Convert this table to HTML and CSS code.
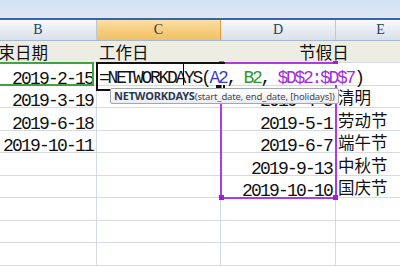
FILE: index.html
```html
<!DOCTYPE html>
<html lang="zh-CN">
<head>
<meta charset="utf-8">
<title>工作日</title>
<link rel="stylesheet" href="styles.css">
</head>
<body>
<div class="app">
  <div class="ribbon"></div>

  <div class="colhead">
    <div class="hcell">B</div>
    <div class="hcell sel">C</div>
    <div class="hcell">D</div>
    <div class="hcell">E</div>
  </div>

  <div class="cells">
    <div class="row title h22">
      <div class="cell zh">结束日期</div>
      <div class="cell zh">工作日</div>
      <div class="cell zh merged">节假日</div>
    </div>

    <div class="row h23">
      <div class="cell num ref-green">2019-2-15</div>
      <div class="cell active">
        <div class="editor"><span>=NETWORKDAYS(</span><span class="r-a">A2</span><span>, </span><span class="r-b">B2</span><span>, </span><span class="r-d">$D$2:$D$7</span><span>)</span><i class="caret"></i></div>
      </div>
      <div class="cell num"></div>
      <div class="cell zh"></div>
    </div>

    <div class="row h22">
      <div class="cell num">2019-3-19</div>
      <div class="cell"></div>
      <div class="cell num">2019-4-5</div>
      <div class="cell zh">清明</div>
    </div>

    <div class="row h23">
      <div class="cell num">2019-6-18</div>
      <div class="cell"></div>
      <div class="cell num">2019-5-1</div>
      <div class="cell zh">劳动节</div>
    </div>

    <div class="row h22">
      <div class="cell num">2019-10-11</div>
      <div class="cell"></div>
      <div class="cell num">2019-6-7</div>
      <div class="cell zh">端午节</div>
    </div>

    <div class="row h23">
      <div class="cell num"></div>
      <div class="cell"></div>
      <div class="cell num">2019-9-13</div>
      <div class="cell zh">中秋节</div>
    </div>

    <div class="row h22">
      <div class="cell num"></div>
      <div class="cell"></div>
      <div class="cell num">2019-10-10</div>
      <div class="cell zh">国庆节</div>
    </div>

    <div class="row h23">
      <div class="cell"></div><div class="cell"></div><div class="cell"></div><div class="cell"></div>
    </div>
    <div class="row h22">
      <div class="cell"></div><div class="cell"></div><div class="cell"></div><div class="cell"></div>
    </div>
    <div class="row h23">
      <div class="cell"></div><div class="cell"></div><div class="cell"></div><div class="cell"></div>
    </div>

    <!-- range highlight for the holidays argument -->
    <div class="range-d">
      <i class="hd tl"></i><i class="hd tr"></i><i class="hd bl"></i><i class="hd br"></i>
    </div>

    <!-- function argument tip -->
    <div class="tip"><b>NETWORKDAYS</b>(start_date, end_date, [holidays])</div>
  </div>
</div>
</body>
</html>
```

FILE: styles.css
```css
* { box-sizing: border-box; }

html, body {
  margin: 0;
  padding: 0;
  background: #ffffff;
  overflow: hidden;
}

.app {
  width: 400px;
  height: 266px;
  overflow: hidden;
  position: relative;
}

/* ribbon strip above the column letters */
.ribbon {
  height: 20px;
  background: linear-gradient(#d3e1f4, #dde8f6);
  border-bottom: 2px solid #3b64a8;
}

/* column letters */
.colhead {
  display: grid;
  grid-template-columns: 117px 124px 115px 90px;
  margin-left: -20px;
  height: 21px;
  border-bottom: 1px solid #a7b9cf;
}

.hcell {
  display: flex;
  align-items: center;
  justify-content: center;
  font-family: "Liberation Serif", serif;
  font-size: 14px;
  color: #26405c;
  background: linear-gradient(#f8fafc, #e6ebf2 55%, #d9e0ea);
  border-right: 1px solid #b9c8da;
}

.hcell.sel {
  background: linear-gradient(#fadfa8, #f6cd7b 55%, #f1c064);
  border-right: 1px solid #ef9b3c;
  color: #2a3a4a;
}

/* cell grid */
.cells {
  position: relative;
}

.row {
  display: grid;
  grid-template-columns: 117px 124px 115px 90px;
  margin-left: -20px;
}

.h22 { height: 22px; }
.h23 { height: 23px; }

.cell {
  position: relative;
  display: flex;
  align-items: flex-end;
  border-right: 1px solid #d5d9e6;
  border-bottom: 1px solid #d8dae2;
  color: #000;
  white-space: nowrap;
}

.title .cell {
  background: #eeede3;
  border-right-color: #eeede3;
}

.title .merged {
  grid-column: span 2;
  justify-content: center;
}

.num {
  justify-content: flex-end;
  padding-right: 3px;
  font-family: "Liberation Mono", monospace;
  font-size: 18px;
  letter-spacing: -1.8px;
  line-height: 12px;
  color: #111;
}

.zh {
  padding-left: 2px;
  padding-bottom: 1px;
  font-family: "Noto Sans CJK SC", sans-serif;
  font-size: 16.5px;
  line-height: 17px;
  color: #111;
}

/* B2 is the green referenced cell */
.ref-green::after {
  content: "";
  position: absolute;
  left: -2px;
  right: 2px;
  top: -1px;
  bottom: -1px;
  border: 2px solid #3fa33f;
}

/* C2: the cell being edited */
.active::before {
  content: "";
  position: absolute;
  left: -1px;
  top: -1px;
  width: 125px;
  height: 25px;
  border: 2px solid #111;
  z-index: 2;
}

.active::after {
  content: "";
  position: absolute;
  left: 119px;
  top: 21px;
  width: 5px;
  height: 5px;
  background: #111;
  z-index: 2;
}

.editor {
  position: absolute;
  left: 1px;
  top: 1px;
  height: 21px;
  width: 269px;
  padding-left: 1px;
  background: #fff;
  font-family: "Liberation Mono", monospace;
  font-size: 18px;
  letter-spacing: -2.3px;
  line-height: 29px;
  color: #111;
  white-space: nowrap;
  z-index: 3;
}

.r-a { color: #3a3ccd; }
.r-b { color: #2e9a35; }
.r-d { color: #a22fd6; }

.caret {
  position: absolute;
  left: 85px;
  top: 0;
  height: 21px;
  width: 1px;
  background: #000;
}

/* D2:D7 range frame */
.range-d {
  position: absolute;
  left: 220px;
  top: 21px;
  width: 117px;
  height: 137px;
  border: 2px solid #ad3ae4;
  z-index: 1;
}

.hd {
  position: absolute;
  width: 5px;
  height: 5px;
  background: #a21fd8;
}
.hd.tl { left: -3px; top: -3px; background: #41b83a; }
.hd.tr { right: -3px; top: -3px; }
.hd.bl { left: -3px; bottom: -3px; }
.hd.br { right: -3px; bottom: -3px; }

/* argument tooltip */
.tip {
  position: absolute;
  left: 110px;
  top: 47px;
  height: 16px;
  padding: 0 3px 0 3px;
  border: 1px solid #a3a7ae;
  border-radius: 2px;
  background: linear-gradient(#ffffff, #e9edf3);
  font-family: "Noto Sans", sans-serif;
  font-size: 9.5px;
  letter-spacing: -0.15px;
  line-height: 14px;
  color: #4a4a4a;
  white-space: nowrap;
  z-index: 4;
}

.tip b {
  font-size: 11px;
  letter-spacing: -0.2px;
  color: #2d3a52;
  font-weight: 700;
}
```
